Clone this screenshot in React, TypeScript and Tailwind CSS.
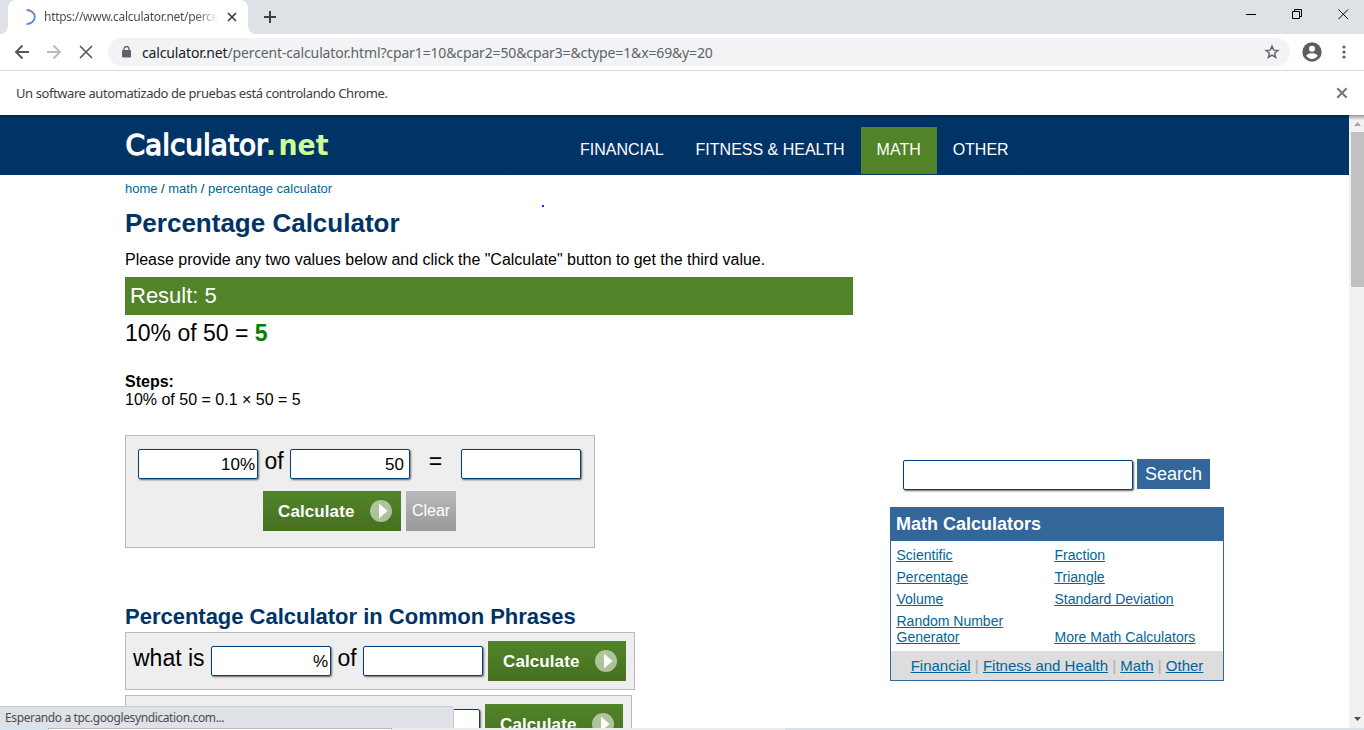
import React from "react";

function PlayBadge() {
  return (
    <svg width="22" height="22" viewBox="0 0 22 22" aria-hidden="true">
      <circle cx="11" cy="11" r="11" fill="#fff" fillOpacity="0.55" />
      <path d="M9 3.5 L17.5 11 L9 18.5 Z" fill="#fff" fillOpacity="0.95" />
    </svg>
  );
}

function CalculateButton() {
  return (
    <button className="flex h-10 w-[138px] shrink-0 items-center justify-between bg-linear-to-b from-[#518428] to-[#467022] pr-[9px] pl-[15px] text-[17px] font-bold tracking-[0.1px] text-white">
      <span className="pt-px">Calculate</span>
      <PlayBadge />
    </button>
  );
}

function Field({ value = "", wide = false, suffix = "" }: { value?: string; wide?: boolean; suffix?: string }) {
  return (
    <div
      className={`flex h-[30px] shrink-0 items-center justify-end rounded-[2px] border border-[#004080] bg-white text-[17px] leading-none shadow-[1px_1px_2px_#666] ${wide ? "w-[230px]" : "w-[120px]"} ${suffix ? "pr-[2px]" : "pr-[5px]"}`}
    >
      <span>{value}</span>
      <span>{suffix}</span>
    </div>
  );
}

function TabStrip() {
  return (
    <div className="flex h-[34px] items-start bg-[#dee1e6]">
      <div className="flex h-[34px] w-2 items-end bg-white">
        <div className="h-[34px] w-2 rounded-br-lg bg-[#dee1e6]" />
      </div>
      <div className="flex h-[34px] w-[240px] items-center rounded-t-lg bg-white pl-4">
        <svg width="14" height="16" viewBox="0 0 14 16" className="mr-[6px]" fill="none">
          <path d="M2.6 1 C7 1 10.8 4 10.8 8 S7 15 2.6 15" stroke="#6089cc" strokeWidth="1.9" />
        </svg>
        <span className="w-[176px] overflow-hidden bg-linear-to-r from-[#45494d] from-86% to-white to-99% bg-clip-text font-['Noto_Sans',sans-serif] text-[12px] tracking-[-0.28px] whitespace-nowrap text-transparent">
          https://www.calculator.net/perce
        </span>
        <svg width="16" height="16" viewBox="0 0 16 16" className="ml-1" fill="none" stroke="#3c4043" strokeWidth="1.7">
          <path d="M4 4 L12 12 M12 4 L4 12" />
        </svg>
      </div>
      <div className="flex h-[34px] w-2 bg-white">
        <div className="h-[34px] w-2 rounded-bl-lg bg-[#dee1e6]" />
      </div>
      <svg width="12" height="12" viewBox="0 0 12 12" className="mt-[11px] ml-2" stroke="#3c4043" strokeWidth="2">
        <path d="M6 0 V12 M0 6 H12" />
      </svg>
      <div className="ml-auto flex pt-[9px] pr-[15px]">
        <svg width="10" height="11" viewBox="0 0 10 11" shapeRendering="crispEdges">
          <path d="M0 5.5 H10" stroke="#000" />
        </svg>
        <svg width="10" height="11" viewBox="0 0 10 11" className="ml-9" fill="none" stroke="#000">
          <path d="M0.5 2.5 H7.5 V9.5 H0.5 Z M2.5 2 V0.5 H9.5 V7.5 H8" />
        </svg>
        <svg width="11" height="11" viewBox="0 0 11 11" className="ml-9" stroke="#000">
          <path d="M0.5 0.5 L10 10 M10 0.5 L0.5 10" />
        </svg>
      </div>
    </div>
  );
}

function Toolbar() {
  return (
    <div className="flex h-[37px] items-center border-b border-[#d9dadc] bg-white pl-[14px]">
      <svg width="16" height="16" viewBox="0 0 16 16" fill="none" stroke="#55585d" strokeWidth="1.9">
        <path d="M15 8 H2 M8.5 1.5 L2 8 L8.5 14.5" />
      </svg>
      <svg width="16" height="16" viewBox="0 0 16 16" className="ml-4" fill="none" stroke="#babcbe" strokeWidth="1.9">
        <path d="M1 8 H14 M7.5 1.5 L14 8 L7.5 14.5" />
      </svg>
      <svg width="16" height="16" viewBox="0 0 16 16" className="ml-4" fill="none" stroke="#55585d" strokeWidth="1.6">
        <path d="M2 2 L14 14 M14 2 L2 14" />
      </svg>
      <div className="ml-[14px] flex h-7 w-[1182px] items-center rounded-full bg-[#f1f3f4] pr-[10px] pl-[14px]">
        <svg width="9" height="12" viewBox="0 0 9 12" fill="none">
          <path d="M2 5 V3 A2.4 2.4 0 0 1 7 3 V5" stroke="#5f6368" strokeWidth="1.3" />
          <rect x="0" y="4" width="9" height="7.5" rx="1" fill="#5f6368" />
        </svg>
        <span className="ml-[11px] font-['Noto_Sans',sans-serif] text-[14px] tracking-[-0.14px] whitespace-nowrap text-[#5f6368]">
          <span className="text-[#202124]">calculator.net</span>/percent-calculator.html?cpar1=10&amp;cpar2=50&amp;cpar3=&amp;ctype=1&amp;x=69&amp;y=20
        </span>
        <svg width="16" height="16" viewBox="0 0 16 16" className="ml-auto" fill="none" stroke="#5f6368" strokeWidth="1.4">
          <path d="M8 2.2 L9.6 6.1 L13.9 6.4 L10.6 9.2 L11.7 13.4 L8 11.1 L4.3 13.4 L5.4 9.2 L2.1 6.4 L6.4 6.1 Z" />
        </svg>
      </div>
      <svg width="20" height="20" viewBox="0 0 20 20" className="ml-3">
        <circle cx="10" cy="10" r="9.7" fill="#5a5e63" />
        <circle cx="10" cy="6.8" r="3" fill="#fff" />
        <path d="M4.2 13.8 C5.5 11.6 8 11.3 10 11.3 S14.5 11.6 15.8 13.8 C14.5 15.8 12.4 16.9 10 16.9 S5.5 15.8 4.2 13.8 Z" fill="#fff" />
      </svg>
      <svg width="4" height="14" viewBox="0 0 4 14" className="ml-5" fill="#5f6368">
        <circle cx="2" cy="2" r="1.6" />
        <circle cx="2" cy="7" r="1.6" />
        <circle cx="2" cy="12" r="1.6" />
      </svg>
    </div>
  );
}

function SiteHeader() {
  return (
    <header className="flex h-[60px] bg-[#003366] bg-linear-to-b from-[#002347] to-[#003366] to-[4px] pl-[125px] text-white">
      <svg width="206" height="34" viewBox="0 0 206 34" className="mt-[13px]">
        <text x="0.5" y="26.5" fontFamily="DejaVu Sans, sans-serif" fontSize="28" fill="#fff" stroke="#fff" strokeWidth="1.3" textLength="142" lengthAdjust="spacingAndGlyphs">
          Calculator
        </text>
        <text x="141" y="27" fontFamily="DejaVu Sans, sans-serif" fontSize="26" fontWeight="bold" fill="#ccff99">
          .
        </text>
        <text x="153.5" y="26.5" fontFamily="DejaVu Sans, sans-serif" fontSize="28" fontWeight="bold" fill="#ccff99" textLength="50" lengthAdjust="spacingAndGlyphs">
          net
        </text>
      </svg>
      <nav className="mt-3 ml-[233px] flex h-[47px] items-center text-[16px]">
        <a className="px-4 pb-[2px]">FINANCIAL</a>
        <a className="px-4 pb-[2px] whitespace-nowrap">FITNESS &amp; HEALTH</a>
        <a className="flex h-[47px] w-[76px] items-center justify-center bg-[#518428] pb-[2px]">MATH</a>
        <a className="px-4 pb-[2px]">OTHER</a>
      </nav>
    </header>
  );
}

function Calculator() {
  return (
    <main className="w-[728px] shrink-0">
      <div className="h-[27px] pt-[6px] text-[13px] leading-4 tracking-[-0.01px] text-[#006699]">
        home <span className="text-[#003366]">/</span> math <span className="text-[#003366]">/</span> percentage calculator
      </div>
      <h1 className="h-[42px] pt-[5px] text-[26px] leading-[32px] font-bold text-[#003366]">Percentage Calculator</h1>
      <p className="h-[33px] pt-[7px] text-[16px] leading-[18px] tracking-[-0.01px]">
        Please provide any two values below and click the "Calculate" button to get the third value.
      </p>
      <h2 className="h-[38px] bg-[#518428] pl-[5px] text-[22px] leading-[37px] text-white">Result: 5</h2>
      <p className="h-[58px] pt-[4px] text-[23px] leading-7">
        10% of 50 = <b className="text-[#008000]">5</b>
      </p>
      <div className="h-[62px] text-[16px] leading-[18px]">
        <b>Steps:</b>
        <div>10% of 50 = 0.1 × 50 = 5</div>
      </div>
      <section className="h-[113px] w-[470px] border border-[#bbb] bg-[#eee] pt-[13px] pl-3">
        <div className="flex text-[23px] leading-6">
          <Field value="10" suffix="%" />
          <span className="w-8 text-center">of</span>
          <Field value="50" />
          <span className="w-[51px] text-center">=</span>
          <Field />
        </div>
        <div className="mt-3 ml-[125px] flex gap-[5px]">
          <CalculateButton />
          <button className="h-10 w-[50px] bg-linear-to-b from-[#b9b9b9] to-[#999] text-[16px] text-white">Clear</button>
        </div>
      </section>
      <h2 className="mt-[54px] h-[30px] text-[22px] leading-[30px] font-bold tracking-[-0.01px] text-[#003366]">
        Percentage Calculator in Common Phrases
      </h2>
      <section className="flex h-[58px] w-[510px] border border-[#bbb] bg-[#eee] pt-2 pl-[7px] text-[23px] leading-[34px]">
        <span className="w-[78px]">what is</span>
        <div className="mt-[5px] flex leading-6">
          <Field suffix="%" />
          <span className="w-8 text-center">of</span>
          <Field />
        </div>
        <div className="ml-[5px]">
          <CalculateButton />
        </div>
      </section>
      <section className="mt-[5px] flex h-[58px] w-[507px] border border-[#bbb] bg-[#eee] pt-2 pl-[234px]">
        <div className="mt-[5px]">
          <Field />
        </div>
        <div className="ml-[5px]">
          <CalculateButton />
        </div>
      </section>
    </main>
  );
}

function Sidebar() {
  return (
    <aside className="ml-[37px] w-[334px] pt-[284px]">
      <div className="ml-[13px] flex gap-1">
        <div className="pt-px">
          <Field wide />
        </div>
        <button className="h-[30px] w-[73px] bg-[#336699] text-[18px] text-white">Search</button>
      </div>
      <section className="mt-[17px] h-[174px] border border-[#336699]">
        <h3 className="h-[33px] bg-[#336699] pl-[5px] text-[18px] leading-[32px] font-bold text-white">Math Calculators</h3>
        <div className="grid h-[110px] grid-cols-[158px_1fr] grid-rows-[22px_22px_22px_44px] pt-[6px] pl-[5.5px] text-[14px] leading-4 text-[#006699] underline">
          <a>Scientific</a>
          <a>Fraction</a>
          <a>Percentage</a>
          <a>Triangle</a>
          <a>Volume</a>
          <a>Standard Deviation</a>
          <a className="w-[120px]">Random Number Generator</a>
          <a className="pt-4">More Math Calculators</a>
        </div>
        <div className="h-[29px] bg-[#ddd] text-center text-[15px] leading-[29px] whitespace-nowrap text-[#aaa]">
          <a className="text-[#006699] underline">Financial</a> | <a className="text-[#006699] underline">Fitness and Health</a> |{" "}
          <a className="text-[#006699] underline">Math</a> | <a className="text-[#006699] underline">Other</a>
        </div>
      </section>
    </aside>
  );
}

export default function App() {
  return (
    <div className="relative flex h-[730px] w-[1364px] flex-col overflow-hidden bg-white font-['Liberation_Sans',Arial,sans-serif] text-black">
      <TabStrip />
      <Toolbar />
      <div className="flex h-[44px] shrink-0 items-center justify-between pr-4 pl-4 font-['Noto_Sans',sans-serif] text-[13px] tracking-[-0.42px] text-[#3c4043]">
        <span className="pt-[2px]">Un software automatizado de pruebas está controlando Chrome.</span>
        <svg width="12" height="12" viewBox="0 0 12 12" stroke="#75787b" strokeWidth="2.1">
          <path d="M1.3 1.3 L10.7 10.7 M10.7 1.3 L1.3 10.7" />
        </svg>
      </div>
      <div className="flex h-[613px] shrink-0 overflow-hidden">
        <div className="w-[1349px] shrink-0">
          <SiteHeader />
          <div className="flex pl-[125px]">
            <Calculator />
            <Sidebar />
          </div>
        </div>
        <div className="flex w-[15px] flex-col items-end bg-[#f1f1f1] bg-linear-to-b from-[#999] to-[#f1f1f1] to-[5px]">
          <svg width="13" height="17" viewBox="0 0 13 17">
            <path d="M3 11 L6.5 7 L10 11 Z" fill="#a3a3a3" />
          </svg>
          <div className="h-[155px] w-[13px] bg-[#c1c1c1]" />
          <svg width="13" height="17" viewBox="0 0 13 17" className="mt-auto">
            <path d="M3 6 H10 L6.5 10 Z" fill="#505050" />
          </svg>
        </div>
      </div>
      <div className="flex h-[2px] shrink-0 bg-[#d9e0e9]">
        <div className="w-12 bg-[#cfe6f3]" />
        <div className="w-[344px] border border-b-0 border-[#bbb] bg-white" />
        <div className="w-[393px] bg-[#ececec]" />
      </div>
      <div className="absolute top-[205px] left-[542px] size-[1.5px] bg-[#2020f0]" />
      <div className="absolute top-[706px] left-0 h-[22px] w-[454px] rounded-tr-[4px] border-t border-r border-[#c8cbd0] bg-[#dee1e6] pl-[5px] font-['Noto_Sans',sans-serif] text-[12px] leading-[22px] tracking-[-0.38px] text-[#4a4d51]">
        Esperando a tpc.googlesyndication.com...
      </div>
    </div>
  );
}
